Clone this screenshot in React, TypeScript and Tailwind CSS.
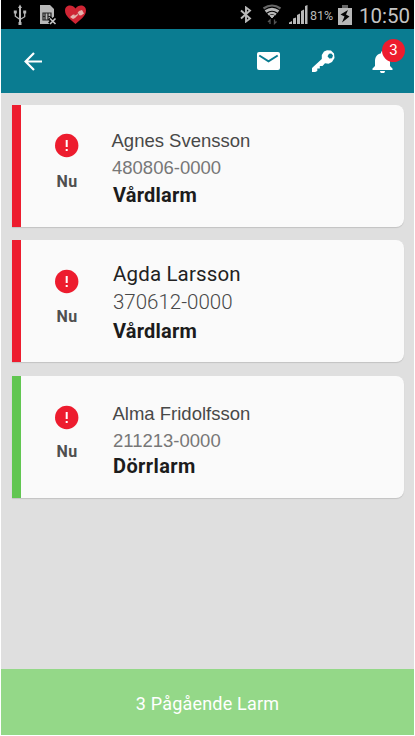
import React from "react";

type Alarm = {
  name: string;
  id: string;
  kind: string;
  bar: string;
  nameClass: string;
  idClass: string;
  kindClass: string;
  iconClass: string;
  nuClass: string;
};

const arial = "font-['Liberation_Sans',Arial,sans-serif]";

const alarms: Alarm[] = [
  {
    name: "Agnes Svensson",
    id: "480806-0000",
    kind: "Vårdlarm",
    bar: "bg-[#ed1c2e]",
    nameClass: `${arial} text-[18.5px] text-[#484848] mt-[22px] -ml-[1.5px]`,
    idClass: `${arial} text-[18.5px] text-[#777] -ml-px`,
    kindClass: "mt-px tracking-[0.2px]",
    iconClass: "mt-[28px]",
    nuClass: "mt-[14px]",
  },
  {
    name: "Agda Larsson",
    id: "370612-0000",
    kind: "Vårdlarm",
    bar: "bg-[#ed1c2e]",
    nameClass: "text-[20.5px] tracking-[0.15px] text-[#222] mt-[21px]",
    idClass: "text-[20.5px] font-light text-[#484848] mt-px",
    kindClass: "mt-[2px] tracking-[0.2px]",
    iconClass: "mt-[29px]",
    nuClass: "mt-[13px]",
  },
  {
    name: "Alma Fridolfsson",
    id: "211213-0000",
    kind: "Dörrlarm",
    bar: "bg-[#61c651]",
    nameClass: `${arial} text-[18.5px] text-[#484848] mt-[24px] -ml-[0.5px]`,
    idClass: `${arial} text-[18.5px] text-[#777]`,
    kindClass: "-mt-px tracking-[0.4px]",
    iconClass: "mt-[29px]",
    nuClass: "mt-[12px]",
  },
];

function StatusBar() {
  return (
    <div className="flex h-[29px] shrink-0 items-center bg-black text-[#b8b8b8]">
      <svg className="ml-[12px]" width="14" height="22" viewBox="0 0 14 22" fill="none" stroke="currentColor" strokeWidth="1.3">
        <path d="M7 3v17" strokeWidth="2" />
        <path d="M2.3 8v4.2L7 15.5l4.700-2.800V8" />
        <path d="M7 0.500 9 4H5z" fill="currentColor" stroke="none" />
        <path d="M.8 6.500h3v3h-3zM10.200 6.500h3v3h-3zM5.500 18h3v3h-3z" fill="currentColor" stroke="none" />
      </svg>
      <svg className="ml-[13px]" width="17" height="20" viewBox="0 0 17 20">
        <path d="M0 0h10l4 4v8l-4 7H0z" fill="#b8b8b8" />
        <path d="M3 8h8v7H3zM5 8v7M8 8v7M3 11.500h2M8 11.500h3" fill="none" stroke="#222" strokeWidth="1.200" />
        <path d="m9.500 13 6 6m0-6-6 6" stroke="#000" strokeWidth="4" />
        <path d="m10 13.500 5.500 5.500m0-5.500L10 19" stroke="#c8c8c8" strokeWidth="1.600" />
      </svg>
      <svg className="ml-[8px]" width="21" height="20" viewBox="0 0 21 20">
        <path d="M10.500 19C7 15.500 0 11.500 0 5.500 0-.5 7.500-1.200 10.500 3.500 13.500-1.200 21-.5 21 5.500c0 6-7 10-10.500 13.500z" fill="#cf2534" />
        <path d="m5 12 3-2.500 3 .5 3-4 3-1 2 3.500-3 2-3-.5-3 3-2 1z" fill="#e6b4ae" />
        <path d="m10 10.500 2-2 2 1" fill="none" stroke="#b5343d" />
      </svg>
      <div className="flex-1" />
      <svg width="12" height="17" viewBox="0 0 12 17" fill="none" stroke="currentColor" strokeWidth="1.900">
        <path d="m1 4.500 9 8L6 15.500v-14l4 3-9 8" />
      </svg>
      <svg className="ml-[10px]" width="20" height="21" viewBox="0 0 20 21" fill="none" stroke="currentColor">
        <path d="M1.500 4.500Q10-1.500 18.500 4.500" stroke="#666" strokeWidth="2.200" />
        <path d="M3.500 7.500q6.500-4.500 13 0" strokeWidth="2.800" />
        <path d="M6 10.500q4-3 8 0" strokeWidth="2.400" />
        <path d="m7.800 11.500 2.200 2.500 2.200-2.500z" fill="currentColor" />
        <path d="M8 20v-4l-2 2M12.500 15.500v4l2-2" stroke="#555" strokeWidth="1.300" />
      </svg>
      <svg className="ml-[7px]" width="19" height="19" viewBox="0 0 19 19" fill="currentColor">
        <path d="M0 19v-1.500L3 16v3zM4 13.500l3-1V19H4zM8 10l3-1.500V19H8zM12 6l3-1.500V19h-3zM16 1l2.500-1v19H16z" />
      </svg>
      <span className="ml-[2px] w-[26px] whitespace-nowrap pt-[2px] text-[12.500px] leading-[27px]">81%</span>
      <svg className="ml-[2px]" width="14" height="20" viewBox="0 0 14 20">
        <path d="M4 0h6v3H4z" fill="#666" />
        <path d="M0 3h14v17H0z" fill="#b8b8b8" />
        <path d="M10 5 2.500 9.500l4 2L4 17.500l7.500-6-3.500-2z" fill="#050505" />
      </svg>
      <span className="ml-[7px] mr-[5px] w-[50px] whitespace-nowrap pt-[3px] text-[20.500px] leading-[26px] text-[#c4c4c4]">10:50</span>
    </div>
  );
}

function Header() {
  return (
    <header className="flex h-[64px] shrink-0 items-center bg-[#0a7c91] text-white">
      <svg className="ml-[23px]" width="18" height="20" viewBox="0 0 18 20" fill="none" stroke="currentColor" strokeWidth="2.200">
        <path d="M18 10.500H2M10 2 1.600 10.500 10 19" />
      </svg>
      <div className="flex-1" />
      <svg width="23" height="18" viewBox="0 0 23 18">
        <rect width="23" height="18" rx="2" fill="currentColor" />
        <path d="m2.300 3.500 9.200 5.800 9.200-5.800" fill="none" stroke="#0a7c91" strokeWidth="2" />
      </svg>
      <svg className="ml-[32px]" width="23" height="23" viewBox="0 0 23 23" fill="currentColor">
        <path fillRule="evenodd" d="M12 1.500 15 .3l4 .3 3 2.900.5 4.500-2.500 4-3.500 1.700-3.500-.4-2.500 2.700H7.800v2.500H5.300v2.400L3.200 22H0v-4L9.800 9V5zm5 2.200-1.500 2.500 1.800 2.300 2.700-.3 1-2.700-1.700-2z" />
      </svg>
      <div className="relative ml-[37px] mr-[21px] h-[23px] w-[21px]">
        <svg width="21" height="23" viewBox="0 0 21 23" fill="currentColor">
          <path d="M9 2.500a1.500 1.500 0 0 1 3 0v.8c4 .8 6 4 6 7.700v5l2.500 2.500V20H.5v-1.500L3 16v-5c0-3.700 2-6.900 6-7.700zM8 21h5a2.500 2.300 0 0 1-5 0z" />
        </svg>
        <span className="absolute -top-[11px] left-[10px] flex size-[23px] items-center justify-center rounded-full bg-[#ed1c2e] text-[15px] leading-none">3</span>
      </div>
    </header>
  );
}

function AlarmCard({ alarm }: { alarm: Alarm }) {
  return (
    <article className="flex h-[122px] overflow-hidden rounded-r-[8px] bg-[#fafafa] shadow-[0_1px_1px_rgba(0,0,0,0.13)]">
      <div className={`w-[9px] shrink-0 ${alarm.bar}`} />
      <div className="flex w-[92px] shrink-0 flex-col items-center">
        <svg className={`shrink-0 ${alarm.iconClass}`} width="24" height="25" viewBox="0 0 24 25">
          <circle cx="11.700" cy="12.500" r="11.700" fill="#ed1c2e" />
          <path d="M10.700 7h2v7h-2zM10.700 16h2v2h-2z" fill="#fff" />
        </svg>
        <span className={`text-[16px] font-bold leading-[20px] tracking-[0.3px] text-[#4f4f4f] ${alarm.nuClass}`}>Nu</span>
      </div>
      <div className="flex flex-col whitespace-nowrap leading-[27px]">
        <span className={alarm.nameClass}>{alarm.name}</span>
        <span className={alarm.idClass}>{alarm.id}</span>
        <span className={`text-[20px] font-bold text-[#1c1c1c] ${alarm.kindClass}`}>{alarm.kind}</span>
      </div>
    </article>
  );
}

export default function App() {
  return (
    <div className="h-[736px] w-[415px] overflow-hidden bg-white px-px font-[Roboto,sans-serif]">
      <div className="flex h-[735px] flex-col bg-[#dfdfdf]">
        <StatusBar />
        <Header />
        <main className="flex flex-1 flex-col gap-[13px] pl-[11px] pr-[10px] pt-[12px]">
          {alarms.map((alarm, i) => (
            <div key={alarm.id} className={i === 2 ? "mt-px" : ""}>
              <AlarmCard alarm={alarm} />
            </div>
          ))}
        </main>
        <footer className="flex h-[66px] shrink-0 items-center justify-center bg-[#94d888] pt-[2px] text-[18px] tracking-[0.2px] text-white">
          3 Pågående Larm
        </footer>
      </div>
    </div>
  );
}
